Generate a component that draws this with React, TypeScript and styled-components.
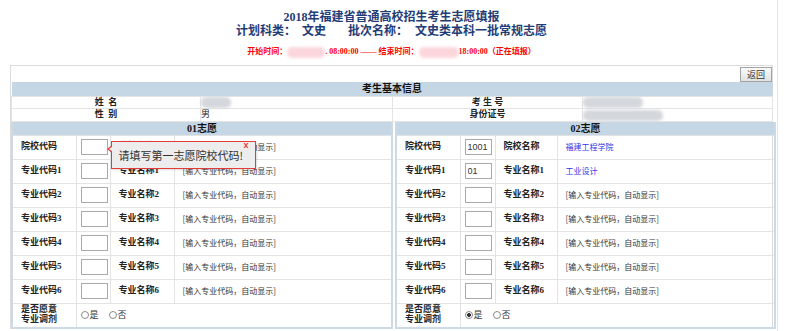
import React from 'react'
import styled, { createGlobalStyle } from 'styled-components'

const GlobalStyle = createGlobalStyle`
  html, body {
    margin: 0;
    padding: 0;
    background: #fff;
  }
  body {
    font-family: "Liberation Serif", "Noto Sans CJK SC", serif;
    color: #222;
  }
`

const Page = styled.div`
  width: 778px;
  height: 331px;
  overflow: hidden;
  padding-left: 10px;
  box-sizing: border-box;
  border-right: 1px solid #e1e5ea;
`

const Heading = styled.div`
  width: 763px;
  padding-top: 10px;
  text-align: center;
`

const Title = styled.div`
  font-size: 12px;
  font-weight: bold;
  line-height: 14px;
  color: #1f3c77;
  white-space: nowrap;
`

const Gap = styled.span<{ w: number }>`
  display: inline-block;
  width: ${p => p.w}px;
`

const TimeLine = styled.div`
  margin-top: 8px;
  font-size: 8px;
  font-weight: bold;
  line-height: 11px;
  color: #f00;
  white-space: nowrap;
`

const Blur = styled.span<{ w: number; tone?: 'pink' | 'gray' }>`
  display: inline-block;
  vertical-align: middle;
  width: ${p => p.w}px;
  height: 11px;
  border-radius: 5px;
  background: ${p => (p.tone === 'gray' ? '#d4d7dc' : '#fbd7dc')};
  filter: blur(1.5px);
`

const Box = styled.div`
  width: 763px;
  margin-top: 7px;
  border: 1px solid #dcdcdc;
  border-bottom: none;
  box-sizing: border-box;
`

const Toolbar = styled.div`
  height: 16px;
  display: flex;
  justify-content: flex-end;
  align-items: flex-start;
`

const BackButton = styled.button`
  width: 32px;
  height: 15px;
  margin-top: 1px;
  padding: 0;
  border: 1px solid #a3a3a3;
  background: linear-gradient(#fafafa, #e2e2e2);
  font-family: "Noto Sans CJK SC", sans-serif;
  font-size: 9px;
  line-height: 13px;
  color: #333;
`

const InfoTable = styled.table`
  width: 100%;
  border-collapse: collapse;
  table-layout: fixed;
  font-size: 9px;
`

const HeadCell = styled.th<{ h?: number }>`
  height: ${p => p.h ?? 14}px;
  padding: 0;
  background: #c5d6e4;
  font-size: 10px;
  line-height: ${p => p.h ?? 14}px;
  font-weight: bold;
  color: #111;
`

const InfoLabel = styled.td`
  height: 11px;
  padding: 0;
  border: 1px solid #e4e4e4;
  text-align: center;
  font-weight: bold;
  line-height: 11px;
  white-space: pre;
`

const InfoValue = styled.td`
  height: 11px;
  padding: 0;
  border: 1px solid #e4e4e4;
  line-height: 11px;
  white-space: nowrap;
  overflow: visible;
`

const Columns = styled.div`
  display: flex;
  gap: 2px;
`

const VTable = styled.table<{ w: number }>`
  width: ${p => p.w}px;
  border-collapse: collapse;
  table-layout: fixed;
  border: 2px solid #ccdae6;
  border-top: none;
`

const Label = styled.td`
  height: 21px;
  padding: 0 0 2px 8px;
  border: 1px solid #e3e3e3;
  font-size: 9px;
  font-weight: bold;
  line-height: 10px;
  color: #222;
`

const Value = styled.td`
  padding: 0 0 2px 8px;
  border: 1px solid #e3e3e3;
  font-family: "Noto Sans CJK SC", sans-serif;
  font-size: 8px;
  color: #333;
  white-space: nowrap;
`

const InputCell = styled.td`
  position: relative;
  padding: 0 0 0 4px;
  border: 1px solid #e3e3e3;
`

const CodeInput = styled.input`
  display: block;
  width: 27px;
  height: 16px;
  box-sizing: border-box;
  padding: 0 2px;
  border: 1px solid #a9a9a9;
  font-family: "Liberation Sans", sans-serif;
  font-size: 9px;
  color: #333;
  outline: none;
`

const Link = styled.a`
  color: #3535e8;
  text-decoration: none;
`

const RadioCell = styled.td`
  padding: 0 0 0 4px;
  border: 1px solid #e3e3e3;
  font-family: "Noto Sans CJK SC", sans-serif;
  font-size: 9px;
  color: #333;
`

const RadioLabel = styled.label`
  display: inline-flex;
  align-items: center;
  margin-right: 10px;
`

const Radio = styled.input`
  appearance: none;
  width: 8px;
  height: 8px;
  margin: 0 1px 0 0;
  border: 1px solid #8a8a8a;
  border-radius: 50%;
  box-sizing: border-box;
  background: #fff;
  &:checked {
    background: radial-gradient(circle, #333 0 1.6px, #fff 2.2px);
  }
`

const Tip = styled.div`
  position: absolute;
  left: 34px;
  top: 5px;
  width: 145px;
  height: 28px;
  box-sizing: border-box;
  border: 1px solid #e63a3a;
  background: #ededed;
  box-shadow: 1px 1px 2px rgba(0, 0, 0, 0.15);
  padding: 0 0 0 7px;
  font-family: "Noto Sans CJK SC", sans-serif;
  font-size: 11px;
  line-height: 26px;
  color: #333;
  white-space: nowrap;
  z-index: 2;
  &::before {
    content: '';
    position: absolute;
    left: -5px;
    top: 3px;
    border-style: solid;
    border-width: 4px 5px 4px 0;
    border-color: transparent #e63a3a transparent transparent;
  }
  &::after {
    content: '';
    position: absolute;
    left: -3px;
    top: 4px;
    border-style: solid;
    border-width: 3px 4px 3px 0;
    border-color: transparent #ededed transparent transparent;
  }
`

const TipClose = styled.span`
  position: absolute;
  right: 6px;
  top: -10px;
  font-family: "Liberation Sans", sans-serif;
  font-size: 9px;
  font-weight: bold;
  color: #e63a3a;
`

type Row = { code: string; name?: string }

const emptyRows = (n: number): Row[] => Array.from({ length: n }, () => ({ code: '' }))

const VolunteerTable: React.FC<{
  title: string
  width: number
  cols: number[]
  rows: Row[]
  agree: boolean
  tip?: boolean
}> = ({ title, width, cols, rows, agree, tip }) => (
  <VTable w={width}>
    <colgroup>
      {cols.map((c, i) => (
        <col key={i} style={{ width: c }} />
      ))}
    </colgroup>
    <thead>
      <tr>
        <HeadCell colSpan={4} h={13}>
          {title}
        </HeadCell>
      </tr>
    </thead>
    <tbody>
      {rows.map((r, i) => (
        <tr key={i}>
          <Label>{i === 0 ? '院校代码' : `专业代码${i}`}</Label>
          <InputCell>
            <CodeInput defaultValue={r.code} />
            {tip && i === 0 && (
              <Tip>
                请填写第一志愿院校代码!
                <TipClose>x</TipClose>
              </Tip>
            )}
          </InputCell>
          <Label>{i === 0 ? '院校名称' : `专业名称${i}`}</Label>
          <Value>
            {r.name ? (
              <Link href="#">{r.name}</Link>
            ) : i === 0 ? (
              '[输入院校代码，自动显示]'
            ) : (
              '[输入专业代码，自动显示]'
            )}
          </Value>
        </tr>
      ))}
      <tr>
        <Label>
          是否愿意
          <br />
          专业调剂
        </Label>
        <RadioCell colSpan={3}>
          <RadioLabel>
            <Radio type="radio" name={title} defaultChecked={agree} />是
          </RadioLabel>
          <RadioLabel>
            <Radio type="radio" name={title} />否
          </RadioLabel>
        </RadioCell>
      </tr>
    </tbody>
  </VTable>
)

const App: React.FC = () => {
  const rightRows: Row[] = [
    { code: '1001', name: '福建工程学院' },
    { code: '01', name: '工业设计' },
    ...emptyRows(5),
  ]
  return (
    <Page>
      <GlobalStyle />
      <Heading>
        <Title>2018年福建省普通高校招生考生志愿填报</Title>
        <Title>
          计划科类：<Gap w={6} />文史<Gap w={22} />批次名称：<Gap w={7} />文史类本科一批常规志愿
        </Title>
        <TimeLine>
          开始时间：<Blur w={38} />. 08:00:00 —— 结束时间：<Blur w={40} />18:00:00（正在填报）
        </TimeLine>
      </Heading>
      <Box>
        <Toolbar>
          <BackButton>返回</BackButton>
        </Toolbar>
        <InfoTable>
          <colgroup>
            <col style={{ width: 189 }} />
            <col style={{ width: 192 }} />
            <col style={{ width: 190 }} />
            <col style={{ width: 190 }} />
          </colgroup>
          <thead>
            <tr>
              <HeadCell colSpan={4}>考生基本信息</HeadCell>
            </tr>
          </thead>
          <tbody>
            <tr>
              <InfoLabel>姓  名</InfoLabel>
              <InfoValue>
                <Blur w={30} tone="gray" />
              </InfoValue>
              <InfoLabel>考 生 号</InfoLabel>
              <InfoValue>
                <Blur w={60} tone="gray" />
              </InfoValue>
            </tr>
            <tr>
              <InfoLabel>性  别</InfoLabel>
              <InfoValue>男</InfoValue>
              <InfoLabel>身份证号</InfoLabel>
              <InfoValue>
                <Blur w={80} tone="gray" />
              </InfoValue>
            </tr>
          </tbody>
        </InfoTable>
        <Columns>
          <VolunteerTable
            title="01志愿"
            width={380}
            cols={[64, 34, 64, 218]}
            rows={emptyRows(7)}
            agree={false}
            tip
          />
          <VolunteerTable
            title="02志愿"
            width={379}
            cols={[64, 35, 62, 218]}
            rows={rightRows}
            agree
          />
        </Columns>
      </Box>
    </Page>
  )
}

export default App
